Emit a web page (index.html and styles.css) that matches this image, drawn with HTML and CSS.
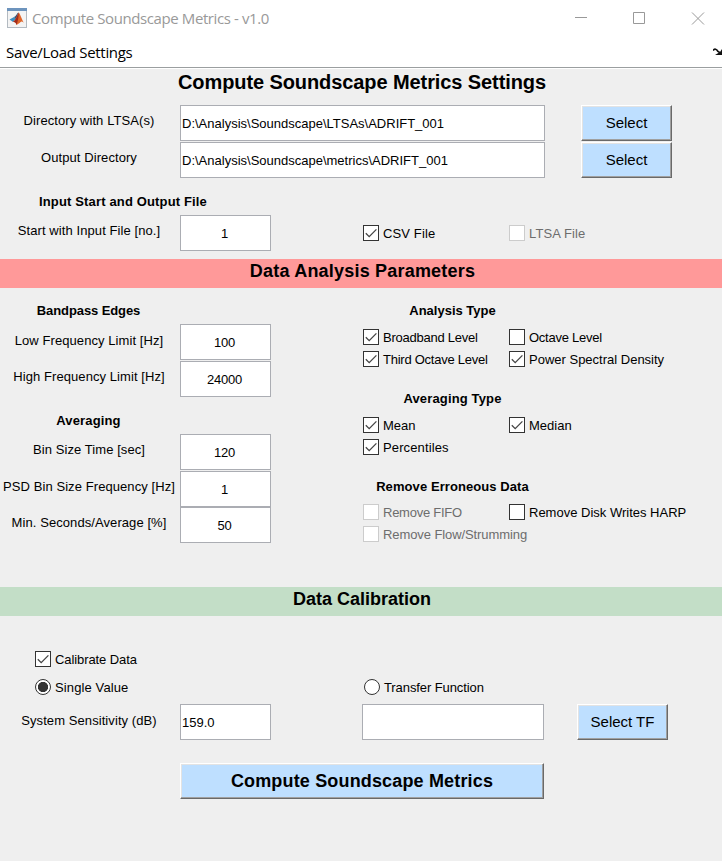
FILE: index.html
```html
<!DOCTYPE html>
<html lang="en">
<head>
<meta charset="utf-8">
<title>Compute Soundscape Metrics - v1.0</title>
<link rel="stylesheet" href="styles.css">
</head>
<body>
<svg class="defs" width="0" height="0"><symbol id="tick" viewBox="0 0 14 14"><path d="M1.8 7.2 5.2 10.6 12.4 3.4" fill="none" stroke="#444" stroke-width="1.3"/></symbol></svg>
<header class="titlebar">
  <svg class="logo" width="20" height="20" viewBox="0 0 20 20">
    <rect x=".5" y=".5" width="19" height="19" fill="#f4f4f4" stroke="#b3bac1"/>
    <rect x="0" y="0" width="20" height="3" fill="#6d94bd"/>
    <path d="M2.5 11.5 7 9 9 11.2 6 14Z" fill="#3c8fc4"/>
    <path d="M7 9C9 8.500 10 5 11.500 4.500L9 11.200Z" fill="#35557a"/>
    <path d="M11.500 4.500C13 5 14.500 11 17 15C15 13 14 13 12.500 15L9.500 17C9 14.500 8 13.500 6 14C9 12 10 8 11.500 4.500Z" fill="#e0662a"/>
    <path d="M11.500 4.500C12 8 11 13 9.500 17C9 14.500 8 13.500 6 14C9 12 10 8 11.500 4.500Z" fill="#a12b1c"/>
  </svg>
  <span class="caption">Compute Soundscape Metrics - v1.0</span>
  <svg class="controls" width="132" height="14" viewBox="0 0 132 14" fill="none" stroke="#999"><path d="M0 5.500H12M58.500.5h11v11h-11zM117 .5l12 12M129 .5l-12 12"/></svg>
</header>
<nav class="menubar"><span>Save/Load Settings</span>
  <svg width="9" height="8" viewBox="0 0 9 8"><path d="M0 2.500Q2.500-.5 5 3.500L9 6" fill="none" stroke="#111" stroke-width="1.700"/><path d="M2 7H9V1L7 4Z" fill="#111"/></svg>
</nav>
<main>
  <h1>Compute Soundscape Metrics Settings</h1>
  <section class="paths">
    <div class="row"><label>Directory with LTSA(s)</label><div class="field">D:\Analysis\Soundscape\LTSAs\ADRIFT_001</div><button>Select</button></div>
    <div class="row"><label>Output Directory</label><div class="field">D:\Analysis\Soundscape\metrics\ADRIFT_001</div><button>Select</button></div>
  </section>
  <section class="files">
    <h3 class="wide">Input Start and Output File</h3>
    <div class="row"><label>Start with Input File [no.]</label><div class="field num">1</div>
      <div class="checks"><span class="check loose"><i><svg><use href="#tick"/></svg></i>CSV File</span><span class="check off loose"><i></i>LTSA File</span></div></div>
  </section>
  <h2 class="analysis">Data Analysis Parameters</h2>
  <section class="params">
    <div class="left">
      <h3 class="band">Bandpass Edges</h3>
      <div class="row"><label class="low">Low Frequency Limit [Hz]</label><div class="field num">100</div></div>
      <div class="row"><label>High Frequency Limit [Hz]</label><div class="field num">24000</div></div>
      <h3 class="avg">Averaging</h3>
      <div class="row"><label>Bin Size Time [sec]</label><div class="field num">120</div></div>
      <div class="row"><label>PSD Bin Size Frequency [Hz]</label><div class="field num">1</div></div>
      <div class="row tight"><label>Min. Seconds/Average [%]</label><div class="field num">50</div></div>
    </div>
    <div class="right">
      <h3 class="even">Analysis Type</h3>
      <div class="checks"><span class="check snug"><i><svg><use href="#tick"/></svg></i>Broadband Level</span><span class="check snug"><i></i>Octave Level</span>
      <span class="check snug"><i><svg><use href="#tick"/></svg></i>Third Octave Level</span><span class="check"><i><svg><use href="#tick"/></svg></i>Power Spectral Density</span></div>
      <h3>Averaging Type</h3>
      <div class="checks"><span class="check"><i><svg><use href="#tick"/></svg></i>Mean</span><span class="check"><i><svg><use href="#tick"/></svg></i>Median</span>
      <span class="check loose"><i><svg><use href="#tick"/></svg></i>Percentiles</span></div>
      <h3 class="remove">Remove Erroneous Data</h3>
      <div class="checks"><span class="check off snug"><i></i>Remove FIFO</span><span class="check"><i></i>Remove Disk Writes HARP</span>
      <span class="check off close"><i></i>Remove Flow/Strumming</span></div>
    </div>
  </section>
  <h2 class="calibration">Data Calibration</h2>
  <section class="calib">
    <span class="check close"><i><svg><use href="#tick"/></svg></i>Calibrate Data</span>
    <div class="radios"><span class="check radio on loose"><i></i>Single Value</span><span class="check radio close"><i></i>Transfer Function</span></div>
    <div class="row"><label class="low">System Sensitivity (dB)</label><div class="field sens">159.0</div><div class="field tf"></div><button>Select TF</button></div>
    <button class="compute">Compute Soundscape Metrics</button>
  </section>
</main>
</body>
</html>
```
FILE: styles.css
```css
* { box-sizing: border-box; }
body { margin: 0; height: 861px; overflow: hidden; background: #efefef; color: #000; font: 13px/16px "Liberation Sans", Arial, sans-serif; }
h1, h2, h3 { margin: 0; text-align: center; font-weight: bold; }
.defs { position: absolute; }
.titlebar { display: flex; height: 37px; background: #fff; padding: 8px 15px 0 7px; }
.caption { font: 15px/21px "Open Sans", "Noto Sans", sans-serif; letter-spacing: -0.4px; color: #999; margin-left: 5px; }
.controls { margin: 4px 0 0 auto; }
.logo { flex: none; }
.menubar { display: flex; justify-content: space-between; height: 32px; padding: 5px 0 0 6px; background: #fff; border-bottom: 1px solid #fff; box-shadow: inset 0 -1px #9b9fa0; font: 15px/20px "Open Sans", "Noto Sans", sans-serif; letter-spacing: -0.3px; }
.menubar svg { margin-top: 6px; }
h1 { font-size: 20px; line-height: 24px; margin-top: 1px; letter-spacing: -0.09px; padding-left: 2px; }
.row { display: flex; height: 37px; }
label { width: 180px; flex: none; text-align: center; padding: 8px 2px 0 0; white-space: nowrap; letter-spacing: 0.08px; }
.low { padding-top: 9px; }
.field { width: 365px; height: 36px; flex: none; border: 1px solid #abadb3; background: #fff; padding-left: 1px; line-height: 36px; white-space: nowrap; }
.num { width: 91px; padding: 0 2px 0 0; text-align: center; letter-spacing: -0.2px; }
button { width: 91px; height: 36px; flex: none; margin-left: 36px; padding: 0; background: #bedfff; color: #000; border: 1px solid; border-color: #fff #696969 #696969 #fff; box-shadow: inset -1px -1px #a0a0a0, inset 1px 1px #e3e3e3; font: 15px/34px "Liberation Sans", Arial, sans-serif; }
.paths { padding-top: 11px; height: 74px; margin-bottom: 26px; box-sizing: content-box; height: 63px; }
.files { height: 65px; }
h3 { font-size: 13px; line-height: 16px; letter-spacing: 0.15px; }
.wide { width: 246px; }
.files .row { margin-top: 5px; }
.checks { display: grid; grid-template-columns: 146px 200px; grid-auto-rows: 22px; margin-left: 92px; }
.files .checks { padding-top: 10px; }
.check { display: flex; align-items: flex-start; height: 16px; line-height: 18px; white-space: nowrap; }
.loose { letter-spacing: 0.12px; }
.close { letter-spacing: -0.09px; }
.snug { letter-spacing: -0.25px; }
.check i { width: 16px; height: 16px; flex: none; margin-right: 4px; background: #fff; border: 1px solid #333; }
.check svg { display: block; width: 14px; height: 14px; }
.off { color: #6d6d6d; }
.off i { border-color: #ccc; }
h2 { height: 29px; font-size: 18px; line-height: 24px; }
.analysis { background: #ff9999; letter-spacing: 0.2px; padding-left: 3px; }
.calibration { background: #c3dec7; padding-left: 2px; }
.params { display: flex; height: 299px; padding-top: 15px; }
.left { width: 363px; }
.left h3 { width: 177px; margin-bottom: 5px; }
.left .band { letter-spacing: -0.1px; }
.left h3.avg { margin: 15px 0 5px; }
.left .tight { margin-top: -1px; }
.right h3 { width: 179px; margin-bottom: 10px; }
.right .even { letter-spacing: 0; }
.right .remove { margin-bottom: 9px; letter-spacing: 0.08px; }
.right .checks { margin-left: 0; }
.right .checks + h3 { margin-top: 18px; }
.calib { padding-top: 35px; }
.calib > .check { margin-left: 35px; }
.radios { display: flex; margin: 12px 0 9px 35px; }
.radios .check { width: 329px; }
.radio i { border-radius: 50%; }
.on i { background: radial-gradient(circle, #333 4.8px, #fff 5.4px); }
.sens { width: 91px; }
.tf { width: 182px; margin-left: 91px; }
.calib .row button { margin-left: 33px; }
.calib .compute { display: block; width: 364px; margin: 22px 0 0 180px; font-size: 18px; font-weight: bold; letter-spacing: 0.16px; }
```
